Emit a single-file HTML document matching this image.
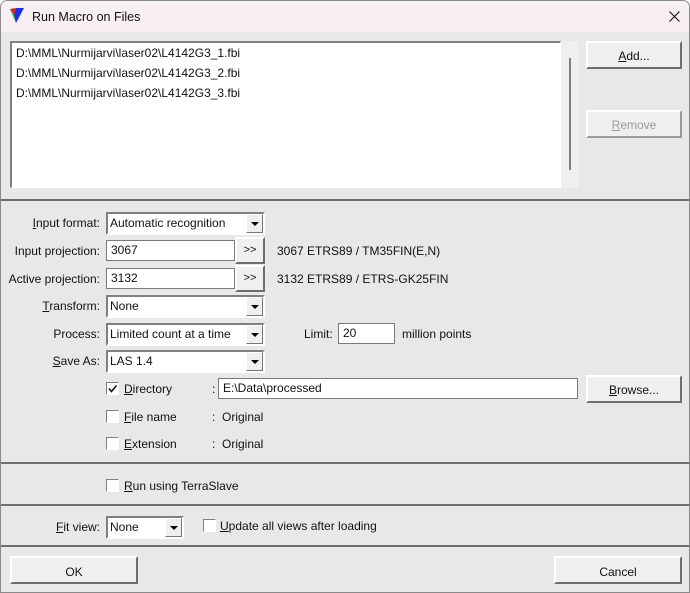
<!DOCTYPE html>
<html><head><style>
*{box-sizing:border-box;margin:0;padding:0}
body{width:690px;height:593px;overflow:hidden;background:#fff;font-family:"Liberation Sans",sans-serif;font-size:12px;color:#111}
#win{position:absolute;left:0;top:0;width:690px;height:593px;background:#e8e8e8;border:1px solid #8a8a8a;border-radius:7px 7px 0 0;overflow:hidden}
#title{position:absolute;left:0;top:0;width:690px;height:31px;background:#f8eff3}
.a{position:absolute;white-space:nowrap}
.field{position:absolute;background:#fff;border:1px solid #7a7a7a;padding:2px 0 0 4px}
.sunk{position:absolute;background:#fff;border-top:2px solid #808080;border-left:2px solid #808080;border-right:1px solid #fff;border-bottom:1px solid #fff}
.btn{position:absolute;background:#efefef;border-top:2px solid #fff;border-left:2px solid #fff;border-right:2px solid #6e6e6e;border-bottom:2px solid #6e6e6e;text-align:center}
.combo{position:absolute;background:#fff;border-top:2px solid #808080;border-left:2px solid #808080;border-right:2px solid #fff;border-bottom:2px solid #fff;padding:2px 0 0 2px}
.combo .dd{position:absolute;right:0;top:0;width:17px;height:100%;background:#efefef;border-left:1px solid #fff;border-top:1px solid #fff;border-right:1px solid #777;border-bottom:1px solid #777}
.combo .dd:after{content:"";position:absolute;left:4px;top:7px;border-left:4px solid transparent;border-right:4px solid transparent;border-top:4px solid #000}
.sep{position:absolute;left:0;width:690px;height:2px;background:#6e6e6e}
.cb{position:absolute;width:13px;height:13px;background:#fff;border-top:1px solid #808080;border-left:1px solid #808080;border-right:1px solid #fff;border-bottom:1px solid #fff}
u{text-decoration:underline}
</style></head><body>
<div id="win">
<div id="title"></div>
<svg class="a" style="left:9px;top:6px" width="16" height="17" viewBox="0 0 16 17"><polygon points="0,2 6,1 4,8" fill="#e02020"/><polygon points="0,2 4,8 6,16" fill="#20c020"/><polygon points="6,1 14,1 6,16 4,8" fill="#2030e0"/></svg>
<div class="a" style="left:31px;top:9px;font-size:12.5px">Run Macro on Files</div>
<svg class="a" style="left:668px;top:10px" width="11" height="11" viewBox="0 0 11 11"><path d="M0.5 0.5L10.5 10.5M10.5 0.5L0.5 10.5" stroke="#111" stroke-width="1.1"/></svg>

<div class="sunk" style="left:9px;top:40px;width:551px;height:147px"></div>
<div class="a" style="left:15px;top:45px">D:\MML\Nurmijarvi\laser02\L4142G3_1.fbi</div>
<div class="a" style="left:15px;top:65px">D:\MML\Nurmijarvi\laser02\L4142G3_2.fbi</div>
<div class="a" style="left:15px;top:85px">D:\MML\Nurmijarvi\laser02\L4142G3_3.fbi</div>
<div class="a" style="left:560px;top:40px;width:17px;height:147px;background:#efefef"></div>
<div class="a" style="left:568px;top:57px;width:2px;height:112px;background:#808080"></div>

<div class="btn" style="left:585px;top:40px;width:96px;height:28px;padding-top:6px"><u>A</u>dd...</div>
<div class="btn" style="left:585px;top:109px;width:96px;height:28px;padding-top:6px;color:#9a9a9a;border-right-color:#9a9a9a;border-bottom-color:#9a9a9a"><u>R</u>emove</div>

<div class="sep" style="top:198px"></div>

<div class="a" style="right:589px;top:215px"><u>I</u>nput format:</div>
<div class="combo" style="left:105px;top:211px;width:159px;height:23px">Automatic recognition<div class="dd"></div></div>
<div class="a" style="right:589px;top:243px">Input projection:</div>
<div class="field" style="left:105px;top:239px;width:129px;height:21px">3067</div>
<div class="btn" style="left:234px;top:236px;width:30px;height:27px;padding-top:5px;font-size:11px">&gt;&gt;</div>
<div class="a" style="left:276px;top:243px">3067 ETRS89 / TM35FIN(E,N)</div>
<div class="a" style="right:589px;top:271px">Active projection:</div>
<div class="field" style="left:105px;top:267px;width:129px;height:21px">3132</div>
<div class="btn" style="left:234px;top:264px;width:30px;height:27px;padding-top:5px;font-size:11px">&gt;&gt;</div>
<div class="a" style="left:276px;top:271px">3132 ETRS89 / ETRS-GK25FIN</div>
<div class="a" style="right:589px;top:298px"><u>T</u>ransform:</div>
<div class="combo" style="left:105px;top:294px;width:159px;height:23px">None<div class="dd"></div></div>
<div class="a" style="right:589px;top:326px">Process:</div>
<div class="combo" style="left:105px;top:322px;width:159px;height:23px">Limited count at a time<div class="dd"></div></div>
<div class="a" style="left:303px;top:326px">Limit:</div>
<div class="field" style="left:337px;top:322px;width:57px;height:21px">20</div>
<div class="a" style="left:401px;top:326px">million points</div>
<div class="a" style="right:589px;top:353px"><u>S</u>ave As:</div>
<div class="combo" style="left:105px;top:349px;width:159px;height:23px">LAS 1.4<div class="dd"></div></div>

<div class="cb" style="left:105px;top:381px"></div>
<svg class="a" style="left:107px;top:383px" width="10" height="10" viewBox="0 0 10 10"><path d="M1 4.5L3.5 7.5L8.5 1.5" stroke="#111" stroke-width="1.6" fill="none"/></svg>
<div class="a" style="left:123px;top:381px"><u>D</u>irectory</div>
<div class="a" style="left:211px;top:381px">:</div>
<div class="field" style="left:217px;top:377px;width:360px;height:21px">E:\Data\processed</div>
<div class="btn" style="left:585px;top:374px;width:96px;height:28px;padding-top:6px"><u>B</u>rowse...</div>
<div class="cb" style="left:105px;top:409px"></div>
<div class="a" style="left:123px;top:409px"><u>F</u>ile name</div>
<div class="a" style="left:211px;top:409px">: &nbsp;Original</div>
<div class="cb" style="left:105px;top:436px"></div>
<div class="a" style="left:123px;top:436px"><u>E</u>xtension</div>
<div class="a" style="left:211px;top:436px">: &nbsp;Original</div>

<div class="sep" style="top:461px"></div>
<div class="cb" style="left:105px;top:478px"></div>
<div class="a" style="left:123px;top:478px"><u>R</u>un using TerraSlave</div>
<div class="sep" style="top:503px"></div>
<div class="a" style="right:589px;top:519px"><u>F</u>it view:</div>
<div class="combo" style="left:105px;top:515px;width:78px;height:23px">None<div class="dd"></div></div>
<div class="cb" style="left:202px;top:518px"></div>
<div class="a" style="left:219px;top:518px"><u>U</u>pdate all views after loading</div>
<div class="sep" style="top:544px"></div>
<div class="btn" style="left:9px;top:555px;width:128px;height:28px;padding-top:7px">OK</div>
<div class="btn" style="left:553px;top:555px;width:128px;height:28px;padding-top:7px">Cancel</div>
</div>
</body></html>
